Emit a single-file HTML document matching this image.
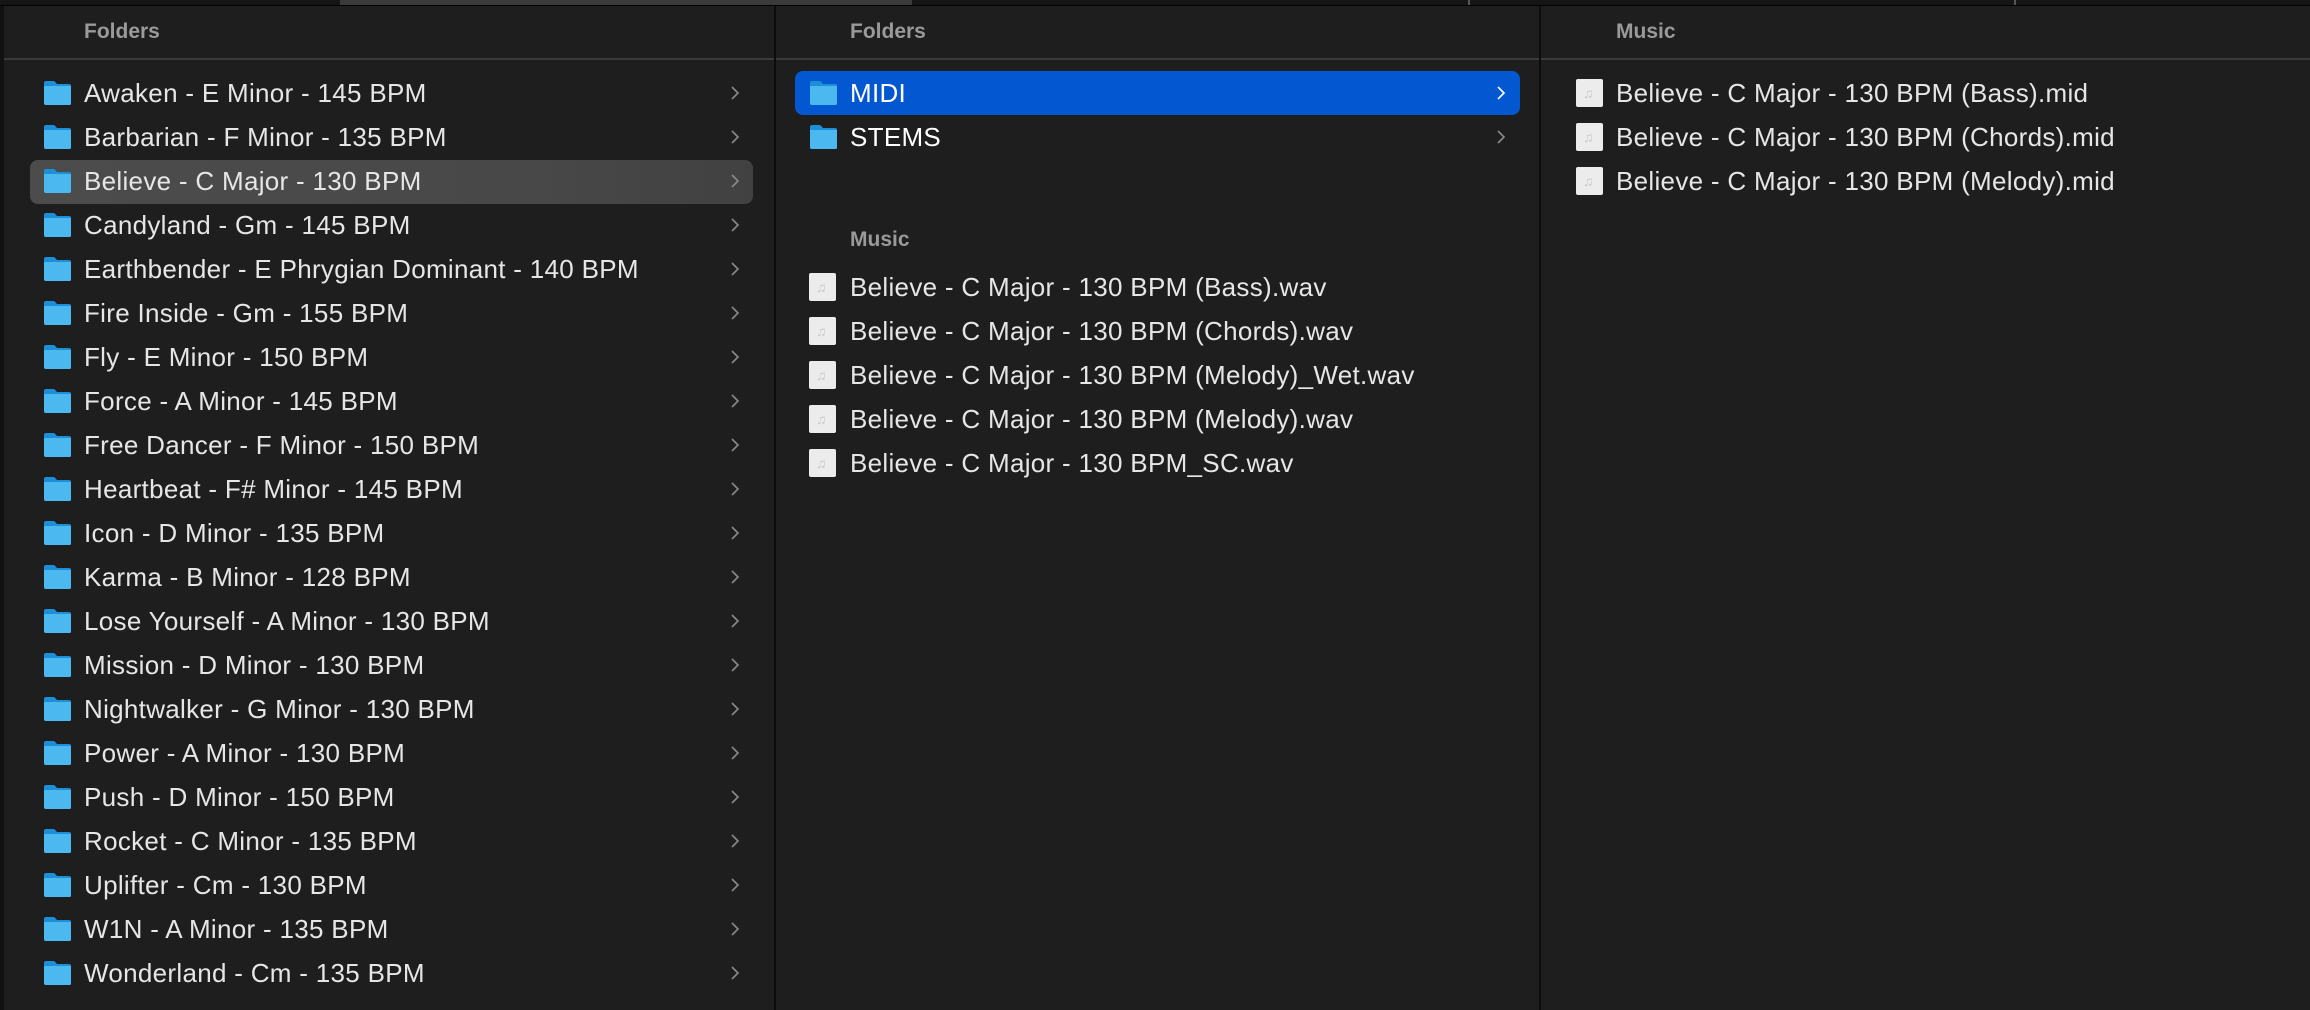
<!DOCTYPE html>
<html><head><meta charset="utf-8"><style>
*{margin:0;padding:0;box-sizing:border-box}
body{width:2310px;height:1010px;background:#1e1e1e;overflow:hidden;font-family:"Liberation Sans",sans-serif;position:relative}
.top{position:absolute;left:0;top:0;width:2310px;height:6px;background:#151515;border-bottom:1px solid #000}
.top .seg{position:absolute;top:0;height:5px;background:#3a3a3a}
.col{position:absolute;top:6px;bottom:0;background:#1f1f1f}
.div{position:absolute;top:6px;bottom:0;width:2px;background:#0c0c0c}
.hdr{position:absolute;font-weight:bold;font-size:21px;color:#9a9a9a}
.sep{position:absolute;top:58px;height:2px;background:#3a3a3a}
.row{position:absolute;height:44px;line-height:44px;font-size:26px;letter-spacing:0.3px;color:#e6e6e6;white-space:nowrap}
.hl{position:absolute;border-radius:8px}
.fold{position:absolute;width:29px;height:26px}
.file{position:absolute;width:27px;height:28px;background:#ececec;border-radius:2px}
.file:after{content:"♫";position:absolute;left:7px;top:4px;font-size:14px;color:#c8c8c8;line-height:20px}
.chev{position:absolute;width:10px;height:14px}
</style></head><body>
<div class="top"><div class="seg" style="left:340px;width:572px"></div><div class="seg" style="left:1468px;width:2px;background:#555"></div><div class="seg" style="left:2014px;width:2px;background:#555"></div></div>
<div class="div" style="left:0;width:4px;background:#111"></div>
<div class="div" style="left:774px"></div>
<div class="div" style="left:1539px"></div>
<div class="sep" style="left:4px;width:770px"></div>
<div class="sep" style="left:776px;width:763px"></div>
<div class="sep" style="left:1541px;width:769px"></div>
<div class="hdr" style="left:84px;top:20px">Folders</div>
<div class="hdr" style="left:850px;top:20px">Folders</div>
<div class="hdr" style="left:1616px;top:20px">Music</div>
<div class="hdr" style="left:850px;top:228px">Music</div>
<div class="hl" style="left:30px;top:160px;width:723px;height:44px;background:linear-gradient(90deg,#4c4c4c,#484848 70%,#414141)"></div>
<div class="hl" style="left:795px;top:71px;width:725px;height:44px;background:#0358d2"></div>
<div id="c"></div>
<script>
const fsvg='<svg viewBox="0 0 29 26" width="29" height="26"><path d="M1 3 Q1 1 3 1 H10 Q12 1 13 3 L14 4 H26 Q28 4 28 6 V24 Q28 25 26 25 H3 Q1 25 1 23 Z" fill="#1d8fd6"/><path d="M1 6 H28 V23 Q28 25 26 25 H3 Q1 25 1 23 Z" fill="#4cb8f0"/></svg>';
const chev=(c)=>'<svg viewBox="0 0 10 14" width="10" height="14"><path d="M2 1 L8 7 L2 13" fill="none" stroke="'+c+'" stroke-width="1.6"/></svg>';
let h='';
const L=["Awaken - E Minor - 145 BPM","Barbarian - F Minor - 135 BPM","Believe - C Major - 130 BPM","Candyland - Gm - 145 BPM","Earthbender - E Phrygian Dominant - 140 BPM","Fire Inside - Gm - 155 BPM","Fly - E Minor - 150 BPM","Force - A Minor - 145 BPM","Free Dancer - F Minor - 150 BPM","Heartbeat - F# Minor - 145 BPM","Icon - D Minor - 135 BPM","Karma - B Minor - 128 BPM","Lose Yourself - A Minor - 130 BPM","Mission - D Minor - 130 BPM","Nightwalker - G Minor - 130 BPM","Power - A Minor - 130 BPM","Push - D Minor - 150 BPM","Rocket - C Minor - 135 BPM","Uplifter - Cm - 130 BPM","W1N - A Minor - 135 BPM","Wonderland - Cm - 135 BPM"];
L.forEach((t,i)=>{const y=71+i*44;
h+='<div class="fold" style="left:43px;top:'+(y+9)+'px">'+fsvg+'</div><div class="row" style="left:84px;top:'+y+'px">'+t+'</div><div class="chev" style="left:730px;top:'+(y+15)+'px">'+chev('#8a8a8a')+'</div>';});
[["MIDI",'#fff'],["STEMS",'#8a8a8a']].forEach((a,i)=>{const y=71+i*44;
h+='<div class="fold" style="left:809px;top:'+(y+9)+'px">'+fsvg+'</div><div class="row" style="left:850px;top:'+y+'px;color:#fff">'+a[0]+'</div><div class="chev" style="left:1496px;top:'+(y+15)+'px">'+chev(a[1])+'</div>';});
["Believe - C Major - 130 BPM (Bass).wav","Believe - C Major - 130 BPM (Chords).wav","Believe - C Major - 130 BPM (Melody)_Wet.wav","Believe - C Major - 130 BPM (Melody).wav","Believe - C Major - 130 BPM_SC.wav"].forEach((t,i)=>{const y=265+i*44;
h+='<div class="file" style="left:809px;top:'+(y+8)+'px"></div><div class="row" style="left:850px;top:'+y+'px">'+t+'</div>';});
["Believe - C Major - 130 BPM (Bass).mid","Believe - C Major - 130 BPM (Chords).mid","Believe - C Major - 130 BPM (Melody).mid"].forEach((t,i)=>{const y=71+i*44;
h+='<div class="file" style="left:1576px;top:'+(y+8)+'px"></div><div class="row" style="left:1616px;top:'+y+'px">'+t+'</div>';});
document.getElementById('c').innerHTML=h;
</script>
</body></html>
